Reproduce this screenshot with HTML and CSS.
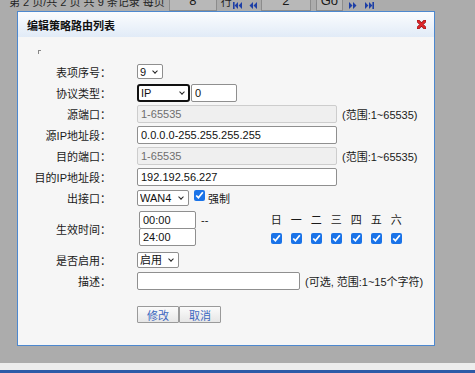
FILE: index.html
```html
<!DOCTYPE html>
<html>
<head>
  <title>编辑策略路由列表</title>
  <meta charset="UTF-8">
  <link rel="stylesheet" href="styles.css">
</head>
<body>
  <div id="pager">
    <div class="pager-inner">
      <span class="pager-text">第 2 页/共 2 页 共 9 条记录 每页</span>
      <span class="pager-box">8</span>
      <span class="pager-text unit">行</span>
      <svg class="nav first" width="9" height="7" viewBox="0 0 9 7"><rect x="0" y="0" width="1.6" height="7" fill="#1d3fa6"/><path d="M5 0 L1.6 3.5 L5 7Z M9 0 L5.6 3.5 L9 7Z" fill="#1d3fa6"/></svg>
      <svg class="nav prev" width="8" height="7" viewBox="0 0 8 7"><path d="M4 0 L0.5 3.5 L4 7Z M8 0 L4.5 3.5 L8 7Z" fill="#1d3fa6"/></svg>
      <span class="pager-box page">2</span>
      <span class="pager-btn">Go</span>
      <svg class="nav next" width="8" height="7" viewBox="0 0 8 7"><path d="M0 0 L3.5 3.5 L0 7Z M4 0 L7.5 3.5 L4 7Z" fill="#1d3fa6"/></svg>
      <svg class="nav last" width="9" height="7" viewBox="0 0 9 7"><path d="M0 0 L3.4 3.5 L0 7Z M4 0 L7.4 3.5 L4 7Z" fill="#1d3fa6"/><rect x="7.4" y="0" width="1.6" height="7" fill="#1d3fa6"/></svg>
    </div>
  </div>

  <div id="dialog">
    <div id="dialog-title">
      <span>编辑策略路由列表</span>
      <svg class="close" width="9" height="9" viewBox="0 0 9 9"><path d="M1.2 1.2 L7.8 7.8 M7.8 1.2 L1.2 7.8" stroke="#8b1010" stroke-width="3.2" stroke-linecap="round"/><path d="M1.2 1.2 L7.8 7.8 M7.8 1.2 L1.2 7.8" stroke="#e0262b" stroke-width="2" stroke-linecap="round"/></svg>
    </div>
    <div id="dialog-body">
      <div class="mark"></div>

      <div class="row">
        <div class="lbl">表项序号：</div>
        <div class="ctl"><span class="selwrap"><select class="sel sel-id"><option>9</option></select></span></div>
      </div>
      <div class="row">
        <div class="lbl">协议类型：</div>
        <div class="ctl">
          <span class="selwrap"><select class="sel sel-proto focused"><option>IP</option></select></span>
          <input class="txt proto" type="text" value="0">
        </div>
      </div>
      <div class="row">
        <div class="lbl">源端口：</div>
        <div class="ctl"><input class="txt wide" type="text" value="1-65535" disabled><span class="hint">(范围:1~65535)</span></div>
      </div>
      <div class="row">
        <div class="lbl">源IP地址段：</div>
        <div class="ctl"><input class="txt wide" type="text" value="0.0.0.0-255.255.255.255"></div>
      </div>
      <div class="row">
        <div class="lbl">目的端口：</div>
        <div class="ctl"><input class="txt wide" type="text" value="1-65535" disabled><span class="hint">(范围:1~65535)</span></div>
      </div>
      <div class="row">
        <div class="lbl">目的IP地址段：</div>
        <div class="ctl"><input class="txt wide" type="text" value="192.192.56.227"></div>
      </div>
      <div class="row">
        <div class="lbl">出接口：</div>
        <div class="ctl">
          <span class="selwrap"><select class="sel sel-wan"><option>WAN4</option></select></span>
          <input class="chk force" type="checkbox" checked>
          <span class="force-lbl">强制</span>
        </div>
      </div>
      <div class="row time-row">
        <div class="lbl">生效时间：</div>
        <div class="ctl">
          <div class="times">
            <input class="txt time" type="text" value="00:00">
            <input class="txt time" type="text" value="24:00">
          </div>
          <span class="dash">--</span>
          <div class="week">
            <span>日</span><span>一</span><span>二</span><span>三</span><span>四</span><span>五</span><span>六</span>
            <input class="chk" type="checkbox" checked>
            <input class="chk" type="checkbox" checked>
            <input class="chk" type="checkbox" checked>
            <input class="chk" type="checkbox" checked>
            <input class="chk" type="checkbox" checked>
            <input class="chk" type="checkbox" checked>
            <input class="chk" type="checkbox" checked>
          </div>
        </div>
      </div>
      <div class="row">
        <div class="lbl">是否启用：</div>
        <div class="ctl"><span class="selwrap"><select class="sel sel-on"><option>启用</option></select></span></div>
      </div>
      <div class="row">
        <div class="lbl">描述：</div>
        <div class="ctl"><input class="txt desc" type="text" value=""><span class="hint">(可选, 范围:1~15个字符)</span></div>
      </div>

      <div class="buttons">
        <button class="btn">修改</button>
        <button class="btn">取消</button>
      </div>
    </div>
  </div>

  <div class="strip"></div>
  <div class="bluebar"></div>
</body>
</html>
```

FILE: styles.css
```css
body {
  margin: 0;
  background-color: #acacac;
  font-family: "Liberation Sans", "Noto Sans CJK SC", sans-serif;
  font-size: 11px;
  color: #1a1a1a;
}

#pager {
  height: 11px;
  overflow: hidden;
}

.pager-inner {
  display: flex;
  align-items: center;
  height: 20px;
  margin-top: -9px;
  padding-left: 9px;
}

.pager-text {
  font-size: 11px;
  color: #1f1f1f;
}

.pager-text.unit {
  margin-left: 4px;
}

.pager-box {
  width: 46px;
  height: 18px;
  margin-left: 4px;
  border: 1px solid #8c8c8c;
  background-color: #b8b8b8;
  text-align: center;
  line-height: 18px;
  font-size: 13px;
}

.pager-box.page {
  width: 48px;
  margin-left: 4px;
}

.pager-btn {
  width: 25px;
  height: 18px;
  margin-left: 5px;
  border: 1px solid #8c8c8c;
  background-color: #b8b8b8;
  text-align: center;
  line-height: 18px;
  font-size: 13px;
}

.nav {
  margin-top: 9px;
}

.nav.first {
  margin-left: 1px;
}

.nav.prev {
  margin-left: 7px;
}

.nav.next {
  margin-left: 6px;
}

.nav.last {
  margin-left: 8px;
}

#dialog {
  width: 416px;
  margin-left: 17px;
  border: 1px solid #4d88cf;
  background-color: #f6f6f6;
}

#dialog-title {
  display: flex;
  align-items: center;
  height: 25px;
  padding: 0 8px 0 9px;
  background: linear-gradient(#fbfcfe, #e1ebf7);
  font-weight: bold;
  color: #111;
}

#dialog-title .close {
  margin-left: auto;
}

#dialog-body {
  padding-bottom: 22px;
}

.mark {
  width: 2px;
  height: 3px;
  margin: 13px 0 7px 20px;
  border-left: 1px solid #888;
  border-top: 1px solid #888;
}

.row {
  display: flex;
  align-items: center;
  height: 21px;
}

.time-row {
  height: 41px;
}

.lbl {
  width: 93px;
  text-align: right;
  color: #1a1a1a;
}

.ctl {
  display: flex;
  align-items: center;
  margin-left: 26px;
}

.txt {
  box-sizing: border-box;
  height: 18px;
  margin: 0;
  padding: 0 3px;
  border: 1px solid #8f8f8f;
  border-radius: 2px;
  background-color: #fff;
  font-family: "Liberation Sans", "Noto Sans CJK SC", sans-serif;
  font-size: 11px;
  color: #111;
}

.txt:disabled {
  background-color: #efefef;
  border-color: #cdcdcd;
  color: #6e6e6e;
}

.txt.wide {
  width: 200px;
}

.txt.proto {
  width: 46px;
  margin-left: 1px;
}

.txt.desc {
  width: 163px;
}

.hint {
  margin-left: 5px;
  color: #1a1a1a;
}

.selwrap {
  position: relative;
  display: inline-flex;
}

.selwrap::after {
  content: "";
  position: absolute;
  right: 6px;
  top: 50%;
  width: 3px;
  height: 3px;
  border-right: 1.4px solid #222;
  border-bottom: 1.4px solid #222;
  transform: translateY(-75%) rotate(45deg);
  pointer-events: none;
}

.sel {
  appearance: none;
  box-sizing: border-box;
  height: 16px;
  margin: 0;
  padding: 0 0 0 2px;
  border: 1px solid #8f8f8f;
  border-radius: 2px;
  background-color: #fff;
  font-family: "Liberation Sans", "Noto Sans CJK SC", sans-serif;
  font-size: 11px;
  color: #111;
}

.sel-id {
  width: 26px;
  height: 15px;
}

.sel-proto {
  width: 53px;
  height: 18px;
}

.sel.focused {
  border: 2px solid #111;
  border-radius: 3px;
  padding-left: 2px;
}

.sel-wan {
  width: 52px;
}

.sel-on {
  width: 42px;
}

.chk {
  width: 11px;
  height: 11px;
  margin: 0;
  accent-color: #1a73e8;
}

.chk.force {
  margin-left: 5px;
  margin-top: -4px;
}

.force-lbl {
  margin-left: 3px;
}

.times {
  display: flex;
  flex-direction: column;
  margin-left: 2px;
}

.txt.time {
  width: 57px;
}

.txt.time + .txt.time {
  margin-top: -1px;
}

.dash {
  margin-left: 5px;
  margin-top: -18px;
}

.week {
  display: grid;
  grid-template-columns: repeat(7, 20px);
  row-gap: 6px;
  justify-items: center;
  margin-left: 58px;
  margin-top: -2px;
}

.buttons {
  display: flex;
  margin: 15px 0 0 119px;
}

.btn {
  width: 42px;
  height: 17px;
  padding: 0;
  border: 1px solid #9a9a9a;
  border-radius: 1px;
  background: linear-gradient(#fbfbfb, #e6e6e6);
  font-family: "Liberation Sans", "Noto Sans CJK SC", sans-serif;
  font-size: 11px;
  color: #3b67bf;
}

.strip {
  height: 7px;
  margin-top: 17px;
  background-color: #ededed;
}

.bluebar {
  height: 3px;
  background-color: #2d5aa7;
}
```
